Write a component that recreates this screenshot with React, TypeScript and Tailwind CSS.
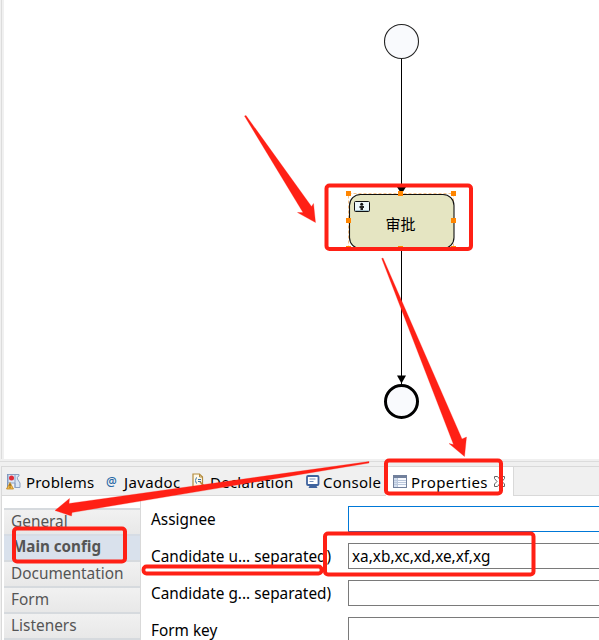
import React from "react";

const ui = "font-['Noto_Sans','Noto_Sans_CJK_SC',sans-serif]";

function Diagram() {
  const handles = [
    [348, 193], [400, 193], [453, 193],
    [348, 220], [453, 220],
    [348, 248], [400, 248], [453, 248],
  ];
  return (
    <svg className="block" width="595" height="459" viewBox="4 0 595 459">
      <circle cx="401.5" cy="41.5" r="17" fill="#f9fafd" stroke="#222" strokeWidth="1.1" />
      <path d="M401.5 59V193M401.5 249V384" stroke="#000" strokeWidth="1" shapeRendering="crispEdges" />
      <path d="M397 187h9l-4.500 7zM397 375.500h9l-4.500 8z" fill="#000" />
      <rect x="348.500" y="193.500" width="105" height="55" fill="none" stroke="#f7c48c" strokeWidth="1" strokeDasharray="3 2" />
      <rect x="349.500" y="194.500" width="104.500" height="54" rx="11" fill="#e5e5c2" stroke="#111" strokeWidth="1.1" />
      <rect x="354.500" y="201.500" width="15" height="10" rx="1" fill="#edf7fa" stroke="#111" />
      <path d="M355 210h14v1h-14z" fill="#a6c3ce" />
      <circle cx="361.700" cy="204.300" r="1.500" fill="#111" />
      <path d="M359.500 206h4.500v2h-1v2h-2.500v-2h-1z" fill="#222" />
      <text x="400.500" y="229.500" textAnchor="middle" fontSize="15" fill="#000" fontFamily="'Noto Sans CJK SC', sans-serif">审批</text>
      {handles.map(([x, y]) => (
        <rect key={`${x}-${y}`} x={x - 2} y={y - 2} width="5" height="5" fill="#ff8500" />
      ))}
      <circle cx="401.500" cy="401.500" r="16" fill="#f9fafd" stroke="#000" strokeWidth="3" />
    </svg>
  );
}

function ProblemsIcon() {
  return (
    <svg width="16" height="18" viewBox="0 0 16 18">
      <path d="M1.500 1v14" stroke="#7893bd" />
      <path d="M2 1.500h11v1.500c-2 0-2 3-1 4l2 3v4.500H9V10H2z" fill="#dce7f5" stroke="#8aa0c2" />
      <path d="M9 2v13" stroke="#8aa0c2" />
      <circle cx="5.500" cy="5" r="2.500" fill="#e02a36" />
      <path d="M4 9.500 7.500 16H.5z" fill="#f5bd48" stroke="#bd8425" strokeWidth=".8" />
      <path d="M4 11v2.500M4 14.300v.8" stroke="#634000" />
    </svg>
  );
}

function DeclarationIcon() {
  return (
    <svg width="14" height="17" viewBox="0 0 14 17">
      <path d="M1 1h6.500l3 3v9.500H1z" fill="#fff9e8" stroke="#b38b3c" strokeWidth="1.200" />
      <path d="M7.500 1v3h3" fill="none" stroke="#b38b3c" />
      <path d="M5 4.500C3.500 4.500 4.500 7 3 7.500c1.500.5.500 3 2 3M6 6.500h3M6 8.500h3" fill="none" stroke="#3973a8" />
      <path d="M8 9l4 4-2 2" fill="none" stroke="#b38b3c" strokeWidth="1.500" />
    </svg>
  );
}

function ConsoleIcon() {
  return (
    <svg width="14" height="14" viewBox="0 0 14 14">
      <rect x="1" y="1" width="11.500" height="9" rx="1" fill="#fff" stroke="#3f639e" strokeWidth="1.800" />
      <path d="M3.500 4h6M3.500 6.500h4" stroke="#718db7" />
      <path d="M4 10h6l1.500 3h-9z" fill="#3f639e" />
    </svg>
  );
}

function PropertiesIcon() {
  return (
    <svg width="14" height="14" viewBox="0 0 14 14" shapeRendering="crispEdges">
      <rect x=".5" y=".5" width="13" height="12" fill="#f7faff" stroke="#71809c" />
      <path d="M0 0h14v3H0z" fill="#71809c" />
      <path d="M1 3h3v9H1z" fill="#d2deee" />
      <path d="M4.500 3v9M1 5.500h12M1 7.500h12M1 9.500h12" stroke="#bac7dc" />
    </svg>
  );
}

function CloseIcon() {
  return (
    <svg className="block" width="11" height="11" viewBox="0 0 11 11">
      <path d="M.5.5h3l2 2.500 2-2.500h3v2L8 5.500 10.500 8v2.500h-3L5.500 8l-2 2.500h-3V8L3 5.500.5 2.500z" fill="#fff" stroke="#666" strokeWidth="1" />
    </svg>
  );
}

function Tabs() {
  return (
    <div className="flex h-[30px] border-y border-[#d9d9d9] bg-[#f0f0f0] text-[15px] leading-[30px] text-black">
      <div className="flex w-[99px] items-center pl-1 pt-px">
        <ProblemsIcon />
        <span className="ml-1 tracking-[0.2px]">Problems</span>
      </div>
      <div className="flex w-[87px] items-center pl-[5px] pt-px">
        <span className="w-[18px] text-[12px] font-medium text-[#2869a6]">@</span>
        <span className="tracking-[0.35px]">Javadoc</span>
      </div>
      <div className="flex w-[114px] items-center pl-1 pt-px">
        <DeclarationIcon />
        <span className="ml-1 tracking-[0.25px]">Declaration</span>
      </div>
      <div className="flex w-[84px] items-center pl-1 pt-px">
        <ConsoleIcon />
        <span className="ml-[3px] tracking-[0.25px]">Console</span>
      </div>
      <div className="-mb-px flex w-[128px] items-center border-r border-[#d9d9d9] bg-white pl-[7px]">
        <PropertiesIcon />
        <span className="ml-1 w-[77px] shrink-0 tracking-[0.4px]">Properties</span>
        <span className="ml-[6px] shrink-0"><CloseIcon /></span>
      </div>
    </div>
  );
}

function Sidebar() {
  return (
    <div className="w-[139px] shrink-0 border-r border-[#d9d9d9] pl-[2px] pt-[12px] text-[15.4px] text-[#555]">
      {["General", "Main config", "Documentation", "Form", "Listeners", ""].map((name) => (
        <div
          key={name}
          className={
            name === "Main config"
              ? "h-[26px] whitespace-nowrap border-t-2 border-[#d6dce4] bg-[#d9e1ec] pl-[8px] text-[15.2px] font-bold leading-[20px]"
              : "h-[26px] whitespace-nowrap border-t-2 border-[#d6dade] bg-linear-to-b from-[#f1f1f1] to-[#e8e8e8] pl-[7px] leading-[24px]"
          }
        >
          {name}
        </div>
      ))}
    </div>
  );
}

function Field({ label, value = "", focused = false }: { label: string; value?: string; focused?: boolean }) {
  return (
    <div className="flex h-[26px] w-[460px] shrink-0 items-center text-[15.35px] text-black">
      <span className="w-[197px] shrink-0 whitespace-nowrap pt-[2px]">{label}</span>
      <div className={`h-[26px] flex-1 border bg-white pl-[3px] leading-[24px] ${focused ? "border-[#0078d7]" : "border-[#7a7a7a]"}`}>
        {value}
      </div>
    </div>
  );
}

function Annotations() {
  return (
    <svg className="pointer-events-none absolute left-0 top-0" width="599" height="640" viewBox="0 0 599 640">
      <g fill="none" stroke="#ff2015" strokeWidth="4">
        <rect x="326.500" y="185.500" width="144.500" height="63.500" rx="3" />
        <rect x="386" y="460.500" width="115" height="33" rx="3" />
        <rect x="14" y="528.500" width="111" height="33" rx="3" />
        <rect x="143.500" y="566.500" width="178" height="7" rx="3" strokeWidth="3.800" />
        <rect x="325" y="533.500" width="208.500" height="41" rx="3" />
      </g>
      <g fill="#ff2015" stroke="#ff2015" strokeWidth=".3" strokeLinejoin="round">
        <path d="M244.500 116L246 115.500L311.500 206.500L313.500 203.500L315.500 222.500L297.500 212.500L303 212.500Z" />
        <path d="M381.700 258.500L383 258L462 439L466.500 437L464.500 456.500L449 443.500L453.500 444.500Z" />
        <path d="M369 461.500L369 463L72 512.500L71.500 516L55 510.500L69.500 498.500L69 503.500Z" />
      </g>
    </svg>
  );
}

export default function App() {
  return (
    <div className={`relative h-[640px] w-[599px] overflow-hidden bg-[#f0f0f0] ${ui}`}>
      <div className="flex h-[462px] flex-col border-b border-[#dcdcdc]">
        <div className="ml-px h-[459px] border-l border-[#dcdcdc] pl-[2px]">
          <div className="bg-white">
            <Diagram />
          </div>
        </div>
      </div>
      <div className="ml-px mt-[4px] flex h-[174px] flex-col border-l border-[#d9d9d9] bg-white">
        <Tabs />
        <div className="flex min-h-0 flex-1">
          <Sidebar />
          <div className="flex flex-col gap-[11px] pl-[10px] pt-[10px]">
            <Field label="Assignee" focused />
            <Field label="Candidate u... separated)" value="xa,xb,xc,xd,xe,xf,xg" />
            <Field label="Candidate g... separated)" />
            <Field label="Form key" />
          </div>
        </div>
      </div>
      <Annotations />
    </div>
  );
}
